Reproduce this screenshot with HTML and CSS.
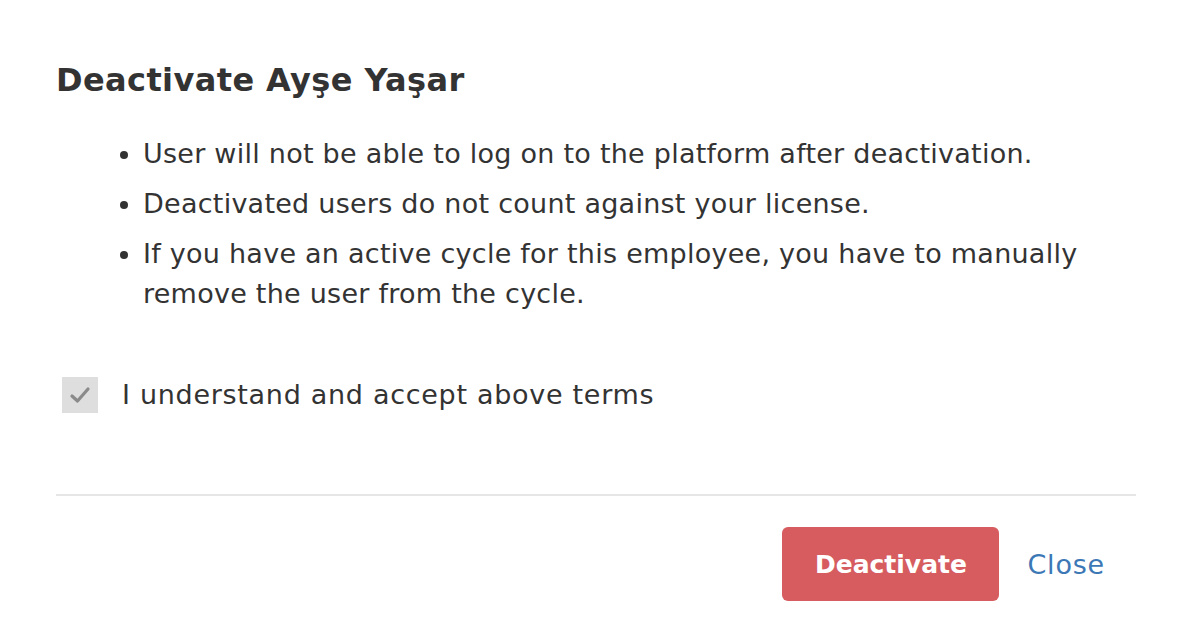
FILE: index.html
```html
<!DOCTYPE html>
<html>
<head>
<meta charset="utf-8">
<link rel="stylesheet" href="styles.css">
</head>
<body>
<div class="modal">
  <h1 class="title">Deactivate Ayşe Yaşar</h1>
  <ul class="terms">
    <li>User will not be able to log on to the platform after deactivation.</li>
    <li>Deactivated users do not count against your license.</li>
    <li>If you have an active cycle for this employee, you have to manually remove the user from the cycle.</li>
  </ul>
  <label class="accept">
    <span class="checkbox">
      <svg width="22" height="22" viewBox="0 0 22 22"><path d="M3 12 L8.5 17 L19 5" fill="none" stroke="#8a8a8a" stroke-width="3.2" stroke-linecap="round" stroke-linejoin="round"/></svg>
    </span>
    <span class="accept-text">I understand and accept above terms</span>
  </label>
  <div class="footer">
    <button class="btn-danger">Deactivate</button>
    <a class="btn-link">Close</a>
  </div>
</div>
</body>
</html>
```
FILE: styles.css
```css
* { box-sizing: border-box; }
body {
  margin: 0;
  background: #fff;
  font-family: "DejaVu Sans", "Open Sans", sans-serif;
  color: #333;
}
.modal {
  padding: 59px 50px 0 56px;
}
.title {
  margin: 0;
  font-size: 32px;
  line-height: 42px;
  font-weight: 700;
  letter-spacing: 0.4px;
  color: #333;
}
.terms {
  margin: 33px 0 0;
  padding-left: 87px;
  font-size: 27px;
  line-height: 40px;
  letter-spacing: 0.25px;
}
.terms li {
  margin-bottom: 10px;
  padding-left: 0;
}
.accept {
  display: flex;
  align-items: center;
  gap: 24px;
  margin-top: 61px;
  padding-left: 6px;
  font-size: 27px;
  line-height: 40px;
  letter-spacing: 0.7px;
}
.checkbox {
  width: 36px;
  height: 36px;
  background: #dedede;
  display: flex;
  align-items: center;
  justify-content: center;
}
.footer {
  margin-top: 79px;
  border-top: 2px solid #e6e6e6;
  display: flex;
  justify-content: flex-end;
  align-items: center;
  padding-top: 31px;
  gap: 28px;
}
.btn-danger {
  width: 217px;
  height: 74px;
  border: 0;
  border-radius: 6px;
  background: #d65c5f;
  color: #fff;
  font-family: inherit;
  font-size: 25px;
  font-weight: 700;
}
.btn-link {
  color: #3d78b6;
  font-size: 27px;
  letter-spacing: 0.8px;
  margin-right: 31px;
}
```
